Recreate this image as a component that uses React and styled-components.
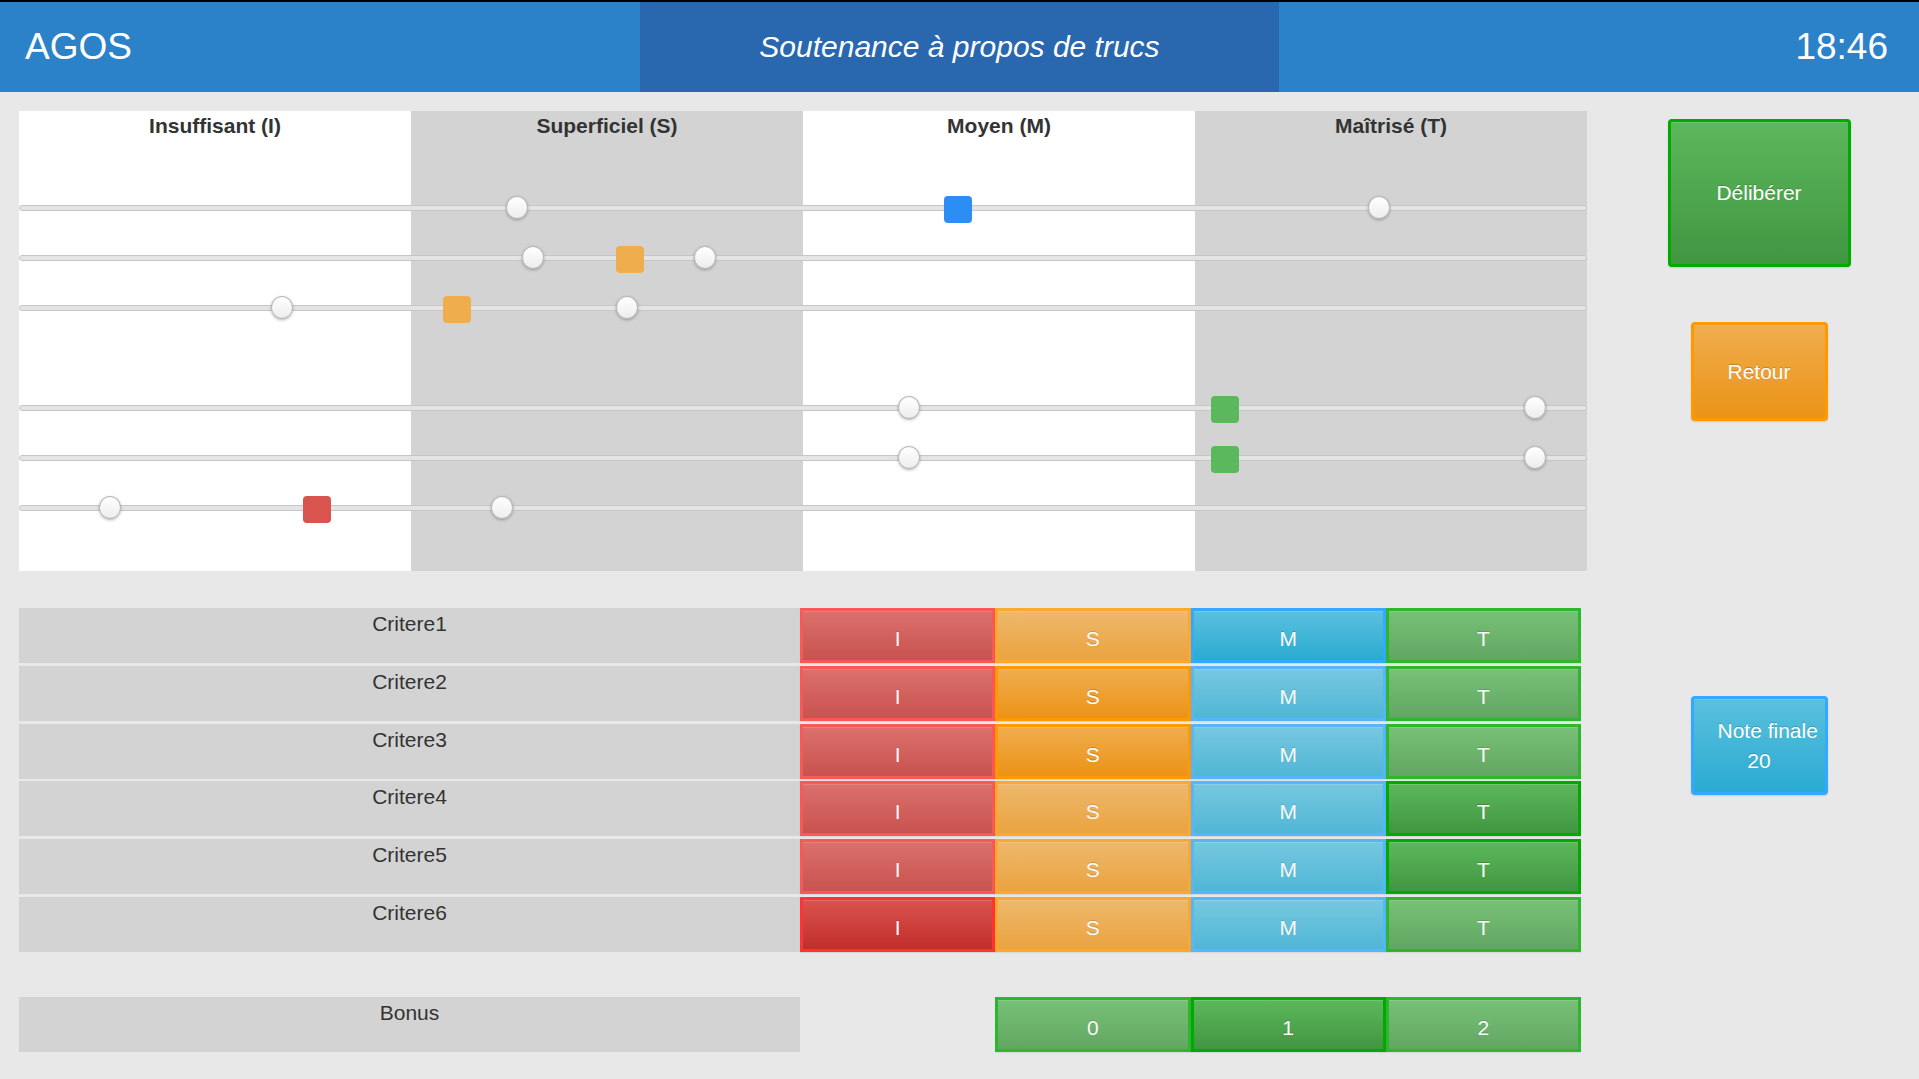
import React from 'react';
import styled, { createGlobalStyle } from 'styled-components';

const GlobalStyle = createGlobalStyle`
  html, body { margin: 0; padding: 0; }
  body {
    background: #e8e8e8;
    font-family: "Liberation Sans", Arial, Helvetica, sans-serif;
    color: #333;
    overflow: hidden;
  }
  * { box-sizing: border-box; }
`;

const tones = {
  danger: { from: '#d9534f', to: '#c12e2a', border: '#ff3333' },
  warning: { from: '#f0ad4e', to: '#eb9316', border: '#ff9900' },
  info: { from: '#5bc0de', to: '#2aabd2', border: '#33aaff' },
  success: { from: '#5cb85c', to: '#419641', border: '#00aa00' },
};

const Page = styled.div`
  width: 1919px;
  min-height: 1079px;
  background: #e8e8e8;
`;

const Header = styled.header`
  display: grid;
  grid-template-columns: 1fr 1fr 1fr;
  height: 92px;
  border-top: 2px solid #000;
  background: #2c82c9;
  color: #fff;
`;

const Brand = styled.div`
  display: flex;
  align-items: center;
  padding-left: 25px;
  font-size: 37px;
`;

const Title = styled.div`
  display: flex;
  align-items: center;
  justify-content: center;
  background: #2967ae;
  font-size: 30px;
  font-style: italic;
`;

const Clock = styled.div`
  display: flex;
  align-items: center;
  justify-content: flex-end;
  padding-right: 31px;
  font-size: 37px;
`;

const Main = styled.main`
  display: flex;
  padding-top: 19px;
`;

const LeftCol = styled.div`
  flex: 0 0 1599px;
  padding-left: 19px;
`;

const RightCol = styled.aside`
  flex: 1;
  display: flex;
  flex-direction: column;
  align-items: center;
`;

const Panel = styled.section`
  position: relative;
  width: 1568px;
  height: 460px;
  display: grid;
  grid-template-columns: repeat(4, 1fr);
`;

const LevelColumn = styled.div`
  background: ${(p) => (p.$shaded ? '#d3d3d3' : '#fff')};
  text-align: center;
  font-weight: bold;
  font-size: 21px;
  line-height: 30px;
  color: #333;
`;

const SliderLayer = styled.div`
  position: absolute;
  left: 0;
  right: 0;
  top: 72px;
  display: flex;
  flex-direction: column;
`;

const SliderRow = styled.div`
  height: 50px;
  display: flex;
  align-items: center;
`;

const Track = styled.div`
  position: relative;
  width: 100%;
  height: 6px;
  background: #e4e4e4;
  border: 1px solid #c6c6c6;
  border-radius: 3px;
`;

const Handle = styled.span`
  position: absolute;
  top: 50%;
  left: ${(p) => p.$x}px;
  width: 22px;
  height: 23px;
  margin: -12px 0 0 -11px;
  border-radius: 50%;
  background: linear-gradient(to bottom, #ffffff, #ededed);
  border: 1px solid #b8b8b8;
  box-shadow: 0 1px 3px rgba(0, 0, 0, 0.28);
`;

const Marker = styled.span`
  position: absolute;
  top: 50%;
  left: ${(p) => p.$x}px;
  width: 28px;
  height: 27px;
  margin: -12px 0 0 -14px;
  border-radius: 4px;
  background: ${(p) => p.$color};
`;

const CriteriaList = styled.div`
  margin-top: 37px;
  width: 1562px;
  display: flex;
  flex-direction: column;
  gap: 2.8px;
`;

const GradeRow = styled.div`
  display: grid;
  grid-template-columns: 781px repeat(4, 1fr);
  height: 55px;
  margin-top: ${(p) => p.$offset || 0}px;
  width: 1562px;
`;

const RowLabel = styled.div`
  background: #d3d3d3;
  text-align: center;
  font-size: 21px;
  line-height: 30px;
  padding-top: 1px;
  color: #333;
`;

const EmptyCell = styled.div``;

const GradeButton = styled.button`
  display: flex;
  align-items: center;
  justify-content: center;
  margin: 0;
  padding: 7px 0 0;
  border: 3px solid ${(p) => tones[p.$tone].border};
  border-radius: 0;
  background-image: linear-gradient(
    to bottom,
    ${(p) => tones[p.$tone].from} 0%,
    ${(p) => tones[p.$tone].to} 100%
  );
  box-shadow: inset 0 1px 0 rgba(255, 255, 255, 0.15), 0 1px 1px rgba(0, 0, 0, 0.075);
  color: #fff;
  font-family: "Liberation Sans", Arial, sans-serif;
  font-size: 21px;
  text-shadow: 0 -1px 0 rgba(0, 0, 0, 0.2);
  opacity: ${(p) => (p.$active ? 1 : 0.8)};
  cursor: pointer;
`;

const ActionButton = styled.button`
  display: flex;
  flex-direction: column;
  align-items: stretch;
  justify-content: center;
  width: ${(p) => p.$w}px;
  height: ${(p) => p.$h}px;
  margin: ${(p) => p.$top}px 0 0;
  padding: 0 24px;
  border: 3px solid ${(p) => tones[p.$tone].border};
  border-radius: 4px;
  background-image: linear-gradient(
    to bottom,
    ${(p) => tones[p.$tone].from} 0%,
    ${(p) => tones[p.$tone].to} 100%
  );
  box-shadow: inset 0 1px 0 rgba(255, 255, 255, 0.15), 0 1px 2px rgba(0, 0, 0, 0.12);
  color: #fff;
  font-family: "Liberation Sans", Arial, sans-serif;
  font-size: 21px;
  text-shadow: 0 -1px 0 rgba(0, 0, 0, 0.2);
  cursor: pointer;
`;

const ButtonLine = styled.span`
  display: block;
  white-space: nowrap;
  text-align: center;
  line-height: 30px;
`;

const levels = ['Insuffisant (I)', 'Superficiel (S)', 'Moyen (M)', 'Maîtrisé (T)'];

const sliders = [
  { min: 497, value: 938, max: 1359, color: '#2b8ef5' },
  { min: 513, value: 610, max: 685, color: '#f0ad4e' },
  { min: 262, value: 437, max: 607, color: '#f0ad4e' },
  null,
  { min: 889, value: 1205, max: 1515, color: '#5cb85c' },
  { min: 889, value: 1205, max: 1515, color: '#5cb85c' },
  { min: 90, value: 297, max: 482, color: '#d9534f' },
];

const grades = [
  { key: 'I', tone: 'danger' },
  { key: 'S', tone: 'warning' },
  { key: 'M', tone: 'info' },
  { key: 'T', tone: 'success' },
];

const criteria = [
  { name: 'Critere1', chosen: 'M' },
  { name: 'Critere2', chosen: 'S' },
  { name: 'Critere3', chosen: 'S' },
  { name: 'Critere4', chosen: 'T' },
  { name: 'Critere5', chosen: 'T' },
  { name: 'Critere6', chosen: 'I' },
];

export default function App() {
  return (
    <Page>
      <GlobalStyle />
      <Header>
        <Brand>AGOS</Brand>
        <Title>Soutenance à propos de trucs</Title>
        <Clock>18:46</Clock>
      </Header>
      <Main>
        <LeftCol>
          <Panel>
            {levels.map((l, i) => (
              <LevelColumn key={l} $shaded={i % 2 === 1}>
                {l}
              </LevelColumn>
            ))}
            <SliderLayer>
              {sliders.map((s, i) => (
                <SliderRow key={i}>
                  {s && (
                    <Track>
                      <Handle $x={s.min} />
                      <Marker $x={s.value} $color={s.color} />
                      <Handle $x={s.max} />
                    </Track>
                  )}
                </SliderRow>
              ))}
            </SliderLayer>
          </Panel>
          <CriteriaList>
            {criteria.map((c) => (
              <GradeRow key={c.name}>
                <RowLabel>{c.name}</RowLabel>
                {grades.map((g) => (
                  <GradeButton key={g.key} $tone={g.tone} $active={c.chosen === g.key}>
                    {g.key}
                  </GradeButton>
                ))}
              </GradeRow>
            ))}
          </CriteriaList>
          <GradeRow $offset={45}>
            <RowLabel>Bonus</RowLabel>
            <EmptyCell />
            {['0', '1', '2'].map((b) => (
              <GradeButton key={b} $tone="success" $active={b === '1'}>
                {b}
              </GradeButton>
            ))}
          </GradeRow>
        </LeftCol>
        <RightCol>
          <ActionButton $tone="success" $w={183} $h={148} $top={8}>
            <ButtonLine>Délibérer</ButtonLine>
          </ActionButton>
          <ActionButton $tone="warning" $w={137} $h={99} $top={55}>
            <ButtonLine>Retour</ButtonLine>
          </ActionButton>
          <ActionButton $tone="info" $w={137} $h={99} $top={275}>
            <ButtonLine>Note finale</ButtonLine>
            <ButtonLine>20</ButtonLine>
          </ActionButton>
        </RightCol>
      </Main>
    </Page>
  );
}
